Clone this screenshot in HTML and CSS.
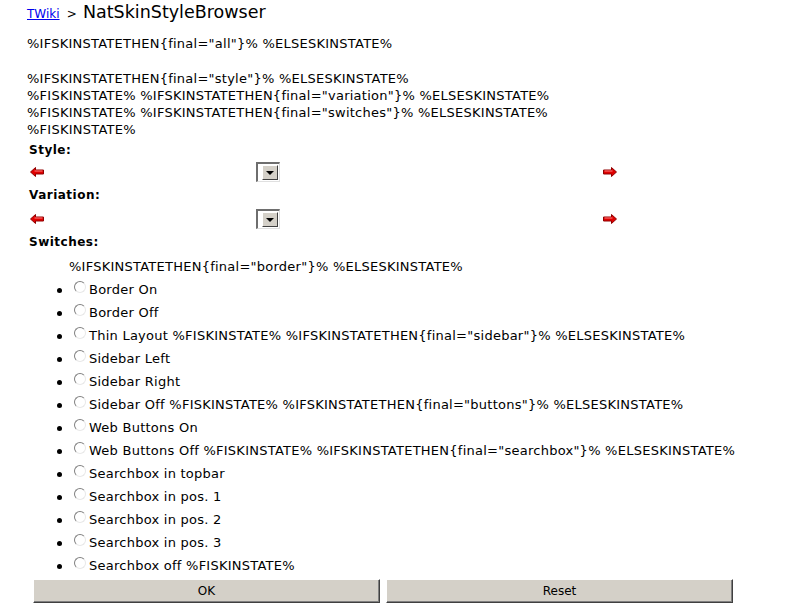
FILE: index.html
```html
<!DOCTYPE html>
<html>
<head>
<meta charset="utf-8">
<title>NatSkinStyleBrowser</title>
<link rel="stylesheet" href="styles.css">
</head>
<body>
<div class="page">
  <div class="crumbs"><a class="web" href="#">TWiki</a> <span class="sep">&gt;</span> <span class="topic">NatSkinStyleBrowser</span></div>
  <p class="txt first">%IFSKINSTATETHEN{final="all"}% %ELSESKINSTATE%</p>
  <p class="txt">%IFSKINSTATETHEN{final="style"}% %ELSESKINSTATE%<br>%FISKINSTATE% %IFSKINSTATETHEN{final="variation"}% %ELSESKINSTATE%<br>%FISKINSTATE% %IFSKINSTATETHEN{final="switches"}% %ELSESKINSTATE%<br>%FISKINSTATE%</p>
  <div class="label l1">Style:</div>
  <div class="chooser r1">
    <svg class="arrow" width="14" height="10" viewBox="0 0 14 10"><path d="M0.5 5 L5.5 0.5 L5.5 3 L13.5 3 L13.5 7 L5.5 7 L5.5 9.5 Z" fill="#e00000" stroke="#900000" stroke-width="1"/><path d="M4.5 4 L12.5 4" stroke="#ff8080" stroke-width="1"/></svg>
    <span class="select"><span class="sel-field"></span><span class="sel-btn"><span class="tri"></span></span></span>
    <svg class="arrow" width="14" height="10" viewBox="0 0 14 10"><path d="M13.5 5 L8.5 0.5 L8.5 3 L0.5 3 L0.5 7 L8.5 7 L8.5 9.5 Z" fill="#e00000" stroke="#900000" stroke-width="1"/><path d="M1.5 4 L9.5 4" stroke="#ff8080" stroke-width="1"/></svg>
  </div>
  <div class="label l2">Variation:</div>
  <div class="chooser r2">
    <svg class="arrow" width="14" height="10" viewBox="0 0 14 10"><path d="M0.5 5 L5.5 0.5 L5.5 3 L13.5 3 L13.5 7 L5.5 7 L5.5 9.5 Z" fill="#e00000" stroke="#900000" stroke-width="1"/><path d="M4.5 4 L12.5 4" stroke="#ff8080" stroke-width="1"/></svg>
    <span class="select"><span class="sel-field"></span><span class="sel-btn"><span class="tri"></span></span></span>
    <svg class="arrow" width="14" height="10" viewBox="0 0 14 10"><path d="M13.5 5 L8.5 0.5 L8.5 3 L0.5 3 L0.5 7 L8.5 7 L8.5 9.5 Z" fill="#e00000" stroke="#900000" stroke-width="1"/><path d="M1.5 4 L9.5 4" stroke="#ff8080" stroke-width="1"/></svg>
  </div>
  <div class="label l3">Switches:</div>
  <div class="pre">%IFSKINSTATETHEN{final="border"}% %ELSESKINSTATE%</div>
  <ul class="switches">
    <li><span class="radio"></span>Border On</li>
    <li><span class="radio"></span>Border Off</li>
    <li><span class="radio"></span>Thin Layout %FISKINSTATE% %IFSKINSTATETHEN{final="sidebar"}% %ELSESKINSTATE%</li>
    <li><span class="radio"></span>Sidebar Left</li>
    <li><span class="radio"></span>Sidebar Right</li>
    <li><span class="radio"></span>Sidebar Off %FISKINSTATE% %IFSKINSTATETHEN{final="buttons"}% %ELSESKINSTATE%</li>
    <li><span class="radio"></span>Web Buttons On</li>
    <li><span class="radio"></span>Web Buttons Off %FISKINSTATE% %IFSKINSTATETHEN{final="searchbox"}% %ELSESKINSTATE%</li>
    <li><span class="radio"></span>Searchbox in topbar</li>
    <li><span class="radio"></span>Searchbox in pos. 1</li>
    <li><span class="radio"></span>Searchbox in pos. 2</li>
    <li><span class="radio"></span>Searchbox in pos. 3</li>
    <li><span class="radio"></span>Searchbox off %FISKINSTATE%</li>
  </ul>
  <div class="buttons">
    <button class="btn" type="button">OK</button>
    <button class="btn" type="button">Reset</button>
  </div>
</div>
</body>
</html>
```
FILE: styles.css
```css
html, body {
  margin: 0;
  padding: 0;
  background: #ffffff;
}
body {
  font-family: "DejaVu Sans", Verdana, sans-serif;
  font-size: 13px;
  letter-spacing: 0.25px;
  color: #000000;
}
.page {
  padding-left: 27px;
}
.crumbs {
  padding-top: 2px;
  height: 20px;
  line-height: 20px;
  margin-bottom: 12.5px;
  white-space: nowrap;
  letter-spacing: 0;
}
.web {
  font-size: 12px;
  color: #0000ee;
  text-decoration: underline;
}
.sep {
  font-size: 12px;
  margin: 0 2px 0 3px;
}
.topic {
  font-size: 17.5px;
}
.txt {
  margin: 0;
  line-height: 17px;
  white-space: nowrap;
}
.txt.first {
  margin-bottom: 18px;
}
.label {
  font-weight: bold;
  font-size: 12px;
  letter-spacing: 0.5px;
  padding-left: 2px;
  line-height: 25px;
}
.label.l1 {
  line-height: 24px;
}
.chooser {
  display: grid;
  grid-template-columns: 226px 347px auto;
  align-items: center;
  padding-left: 3px;
}
.r1 { height: 21px; }
.r2 { height: 22px; }
.arrow {
  display: block;
}
.select {
  display: flex;
  width: 24px;
  height: 20px;
  box-sizing: border-box;
  border-top: 2px solid #6e6e6e;
  border-left: 2px solid #6e6e6e;
  border-right: 1px solid #e0e0e0;
  border-bottom: 1px solid #e0e0e0;
  background: #ffffff;
}
.sel-field {
  width: 4px;
}
.sel-btn {
  flex: 1;
  margin: 1px 1px 1px 0;
  background: #d4d0c8;
  border-right: 1px solid #404040;
  border-bottom: 1px solid #404040;
  border-top: 1px solid #ffffff;
  border-left: 1px solid #ffffff;
  display: flex;
  align-items: center;
  justify-content: center;
}
.tri {
  width: 0;
  height: 0;
  border-left: 4px solid transparent;
  border-right: 4px solid transparent;
  border-top: 4px solid #000000;
  margin-top: 1px;
}
.pre {
  padding-left: 42px;
  line-height: 24px;
  white-space: nowrap;
}
.switches {
  list-style: none;
  margin: 0;
  padding: 0 0 0 30px;
}
.switches li {
  display: flex;
  align-items: center;
  height: 23px;
  margin-top: -0.5px;
  margin-bottom: 0.5px;
  white-space: nowrap;
}
.switches li::before {
  content: "";
  width: 5px;
  height: 5px;
  border-radius: 50%;
  background: #000000;
  margin-right: 12px;
  margin-top: 2px;
}
.radio {
  width: 12px;
  height: 12px;
  box-sizing: border-box;
  border-radius: 50%;
  border: 1px solid;
  border-color: #808080 #e8e8e8 #e8e8e8 #808080;
  background: #ffffff;
  margin-right: 3px;
  margin-top: -5px;
  flex: none;
}
.buttons {
  display: flex;
  gap: 6px;
  margin-top: 1.5px;
  margin-left: 6px;
  width: 700px;
}
.btn {
  flex: 1;
  height: 24px;
  padding: 0;
  font-family: "DejaVu Sans", Verdana, sans-serif;
  font-size: 12px;
  color: #000000;
  background: #d4d0c8;
  border: 1px solid;
  border-color: #ffffff #404040 #404040 #ffffff;
  box-shadow: inset -1px -1px 0 #808080;
}
```
